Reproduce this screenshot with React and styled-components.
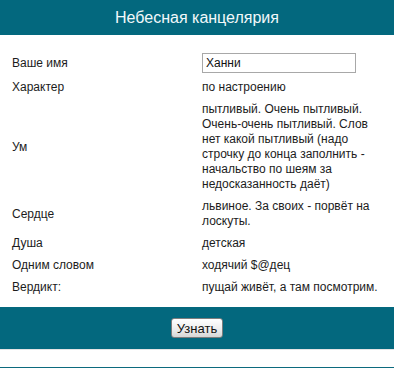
import React from 'react';
import styled, { createGlobalStyle } from 'styled-components';

const GlobalStyle = createGlobalStyle`
  body {
    margin: 0;
    background: #fff;
    font-family: "Liberation Sans", Arial, sans-serif;
  }
`;

const Panel = styled.div`
  width: 394px;
`;

const Header = styled.div`
  height: 35px;
  background: #03687e;
  color: #f2f8fa;
  font-size: 16px;
  display: flex;
  align-items: center;
  justify-content: center;
`;

const Form = styled.table`
  width: 100%;
  table-layout: fixed;
  border-collapse: collapse;
  margin: 15px 0 8px;
  font-size: 12px;
  line-height: 15px;
  color: #1c1c1c;
`;

const Label = styled.td`
  width: 190px;
  padding: 3px 0 4px 12px;
  vertical-align: middle;
`;

const Value = styled.td`
  padding: 3px 12px 4px 0;
  vertical-align: middle;
`;

const NameInput = styled.input`
  width: 154px;
  height: 20px;
  box-sizing: border-box;
  margin: 0;
  padding: 0 3px;
  border: 1px solid #a8a8a8;
  font: 12px "Liberation Sans", Arial, sans-serif;
  color: #111;
  outline: none;
`;

const Footer = styled.div`
  height: 42px;
  background: #03687e;
  display: flex;
  align-items: center;
  justify-content: center;
`;

const Button = styled.button`
  height: 20px;
  padding: 0 5px;
  border: 1px solid #7d7d7d;
  border-radius: 3px;
  background: linear-gradient(#ffffff, #ececec 60%, #d6d6d6);
  font: 13px "Liberation Sans", Arial, sans-serif;
  color: #111;
`;

const Bottom = styled.div`
  height: 17px;
  border-top: 1px solid #e4e4e4;
  border-bottom: 1px solid #0c6a7e;
`;

const rows = [
  ['Характер', 'по настроению'],
  ['Ум', 'пытливый. Очень пытливый. Очень-очень пытливый. Слов нет какой пытливый (надо строчку до конца заполнить - начальство по шеям за недосказанность даёт)'],
  ['Сердце', 'львиное. За своих - порвёт на лоскуты.'],
  ['Душа', 'детская'],
  ['Одним словом', 'ходячий $@дец'],
  ['Вердикт:', 'пущай живёт, а там посмотрим.'],
];

export default function App() {
  return (
    <Panel>
      <GlobalStyle />
      <Header>Небесная канцелярия</Header>
      <Form>
        <tbody>
          <tr>
            <Label>Ваше имя</Label>
            <Value>
              <NameInput defaultValue="Ханни" />
            </Value>
          </tr>
          {rows.map(([label, value]) => (
            <tr key={label}>
              <Label>{label}</Label>
              <Value>{value}</Value>
            </tr>
          ))}
        </tbody>
      </Form>
      <Footer>
        <Button>Узнать</Button>
      </Footer>
      <Bottom />
    </Panel>
  );
}
